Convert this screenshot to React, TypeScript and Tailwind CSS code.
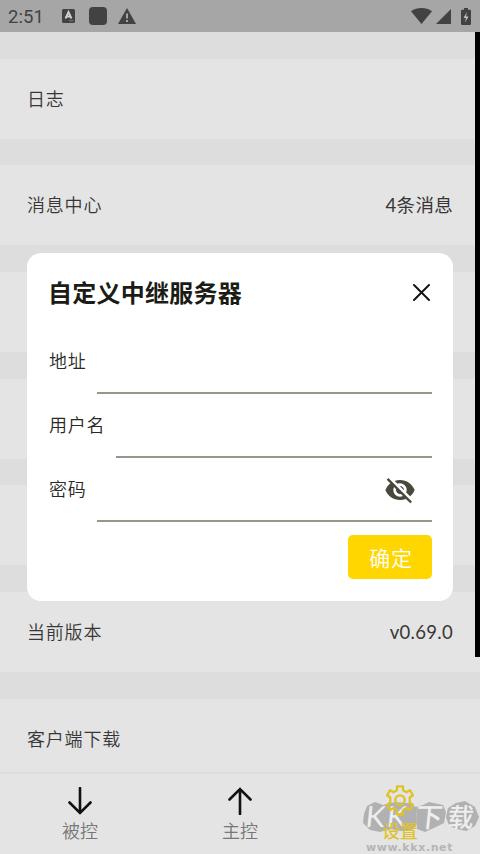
import React from 'react';
import { MdVisibilityOff } from 'react-icons/md';

const rows = [
  { label: '日志', value: '' },
  { label: '消息中心', value: '4条消息' },
  { label: '', value: '' },
  { label: '', value: '' },
  { label: '', value: '' },
  { label: '当前版本', value: 'v0.69.0' },
  { label: '客户端下载', value: '' },
];

function StatusBar() {
  return (
    <header className="h-8 shrink-0 bg-[#a6a6a6] text-[#424242] flex items-center pl-2 pr-[9px]">
      <span className="w-[54px] pt-[3px] font-['Roboto',sans-serif] text-[18.5px] tracking-[0.1px]">2:51</span>
      <svg className="w-[13px] h-[14px]" viewBox="0 0 13 14">
        <rect width="13" height="14" rx="1.5" fill="#424242" />
        <path d="M3.5 9.5 6.5 3l3 6.5M4.6 7.5h3.8" fill="none" stroke="#d0d0d0" strokeWidth="1.8" />
        <path d="M7 11.8h4.5" stroke="#8a8a8a" strokeWidth="0.8" />
      </svg>
      <div className="ml-[14px] size-[18px] rounded-[4px] bg-[#424242]"></div>
      <svg className="ml-[11px] w-[18px] h-[16px]" viewBox="0 0 18 16">
        <path d="M9 0 18 16H0Z" fill="#424242" />
        <path d="M9 5.5v5M9 12v2" stroke="#b0b0b0" strokeWidth="1.8" />
      </svg>
      <svg className="ml-auto w-[21px] h-[16px]" viewBox="0 0 21 16">
        <path d="M10.5 16 0 3.2C6-1 15-1 21 3.2Z" fill="#424242" />
      </svg>
      <svg className="ml-[4px] w-[15px] h-[15px]" viewBox="0 0 15 15">
        <path d="M15 0v15H0Z" fill="#424242" />
      </svg>
      <svg className="ml-[10px] w-[10px] h-[17px]" viewBox="0 0 10 17">
        <path d="M3 0h4v1.7h2q1 0 1 1V16q0 1-1 1H1q-1 0-1-1V2.7q0-1 1-1h2Z" fill="#424242" />
        <path d="M6 4 2.5 10H5l-1 4.5L7.5 8.5H5Z" fill="#c4c4c4" />
      </svg>
    </header>
  );
}

function Field({ label, children }: { label: string; children?: React.ReactNode }) {
  return (
    <div className="h-16 flex items-start">
      <span className="shrink-0 mr-[11px] leading-[27px] pt-[5px] text-[18px] font-[350] tracking-[0.7px]">{label}</span>
      <div className="grow h-[52px] border-b-2 border-[#96968c] flex items-start justify-end pr-[16px] pt-[4px]">{children}</div>
    </div>
  );
}

function RelayDialog() {
  return (
    <section className="absolute left-[27px] top-[253px] w-[426px] h-[348px] rounded-[14px] bg-white pl-[22px] pr-[21px] text-[#292925]">
      <div className="h-[89px] pt-[21px] flex items-start justify-between">
        <h1 className="-ml-px text-[24px] leading-[36px] font-bold tracking-[0.25px] text-[#1c1c16]">自定义中继服务器</h1>
        <svg className="mt-[10px] mr-[2px] w-[17px] h-[17px]" viewBox="0 0 17 17">
          <path d="M1 1 16 16M16 1 1 16" stroke="#111" strokeWidth="1.9" strokeLinecap="round" />
        </svg>
      </div>
      <Field label="地址" />
      <Field label="用户名" />
      <Field label="密码">
        <MdVisibilityOff className="size-8 text-[#49483c]" />
      </Field>
      <button className="ml-auto mt-[1px] block w-[84px] h-[44px] rounded-[5px] bg-[#ffd600] pl-[2px] text-white text-[21px] leading-[43px] font-[350] tracking-[0.7px]">确定</button>
    </section>
  );
}

function Arrow({ className }: { className?: string }) {
  return (
    <svg className={className} width="24" height="28" viewBox="0 0 24 28">
      <path d="M12 1v25M1.5 15.5 12 26l10.5-10.5" fill="none" stroke="#111" strokeWidth="2.6" strokeLinecap="round" />
    </svg>
  );
}

function Gear() {
  return (
    <svg width="28" height="31" viewBox="0 0 28 31" fill="none" stroke="#dfc22b" strokeWidth="2.3" strokeLinejoin="round">
      <path d="M11 1.300h6v4l3.500 2 3.500-2 3 5-3.300 2.200v5L27 20l-3 5-3.500-2-3.500 2v4.500h-6V25l-3.500-2L4 25l-3-5 3.300-2.500v-5L1 10.300l3-5 3.500 2 3.500-2Z" />
      <circle cx="14" cy="15" r="4.700" />
    </svg>
  );
}

function Watermark() {
  return (
    <div className="absolute left-[363px] top-[800px] w-[117px] h-[54px]">
      <svg className="absolute inset-0" width="117" height="54" viewBox="0 0 117 54" fill="#b1b1b1">
        <path d="M1 14 4 6 12 2l8 3 12-3 13 1 8 4 1 17-5 6-12 1-9-2-11 3-10-2-7-7Z" />
        <path d="m53 7 7-2 6-3 14 3 3 7-2 11-8 4-11 5-8-3Z" />
        <path d="m85 8 8-5 9-2 10 6 4 10-4 9-9 5-9-2-8-3-3-9Z" />
      </svg>
      <div className="absolute left-[3px] top-[1px] flex items-center leading-[30px] text-[#eeeeee] whitespace-nowrap">
        <span className="w-[50px] font-['Lato',sans-serif] text-[29px] tracking-[2px] -skew-x-6">KK</span>
        <span className="w-[32px] text-[27px] font-medium -skew-x-6">下</span>
        <span className="text-[26px] font-medium -skew-x-6">载</span>
      </div>
      <span className="absolute left-[3px] top-[41px] font-['DejaVu_Sans',sans-serif] font-bold text-[11px] leading-[14px] tracking-[0.6px] text-[#b5b5b5]">www.kkx.net</span>
    </div>
  );
}

export default function App() {
  return (
    <div className="relative w-[480px] h-[854px] overflow-hidden flex flex-col bg-[#dddddd] text-[#373737] font-['Noto_Sans_CJK_SC',sans-serif]">
      <StatusBar />
      <main className="grow min-h-0 overflow-hidden">
        {rows.map((row, i) => (
          <div key={i} className="mt-[26.7px] h-[80px] bg-[#e4e4e4] px-[27px] pb-px flex items-center justify-between text-[18px] font-[350] tracking-[0.8px]">
            <span>{row.label}</span>
            <span className="pt-[2px] font-['Lato','Noto_Sans_CJK_SC',sans-serif] text-[18.5px] font-normal tracking-[0.3px]">{row.value}</span>
          </div>
        ))}
      </main>
      <nav className="h-[82px] shrink-0 border-t-2 border-[#dcdcdc] bg-[#e4e4e4] grid grid-cols-3 text-[18px] leading-[27px] text-[#777]">
        <div className="flex flex-col items-center pt-[13px]">
          <Arrow />
          <span className="mt-[2px] font-[350]">被控</span>
        </div>
        <div className="flex flex-col items-center pt-[13px]">
          <Arrow className="rotate-180" />
          <span className="mt-[2px] font-[350]">主控</span>
        </div>
        <div className="relative z-10 flex flex-col items-center pt-[11px]">
          <Gear />
          <span className="mt-[1px] font-medium text-[#dfc22b]">设置</span>
        </div>
      </nav>
      <Watermark />
      {/* scroll indicator */}
      <div className="absolute right-0 top-8 w-[5px] h-[625px] bg-black"></div>
      <RelayDialog />
    </div>
  );
}
